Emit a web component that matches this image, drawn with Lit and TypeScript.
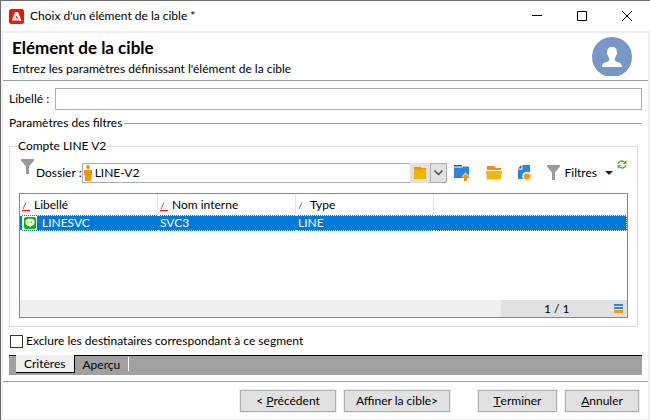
import { LitElement, html, css, svg } from "lit";
import { customElement, property, state } from "lit/decorators.js";
import { classMap } from "lit/directives/class-map.js";

const funnel = html`<svg class="funnel" width="13" height="15" viewBox="0 0 13 15" aria-hidden="true">
  <path fill="#9a9a9a" d="M0 0h13v1.5L8 7.5V15H5V7.5L0 1.5z" />
</svg>`;

const sortMark = (active: boolean) => html`<svg class="sort" width="8" height="9" viewBox="0 0 8 9" aria-hidden="true">
  <path d="M1 7L4 0.5" stroke="#777" fill="none" />
  ${active ? svg`<path d="M0 8.5h8" stroke="#f00" />` : ""}
</svg>`;

interface Service {
  label: string;
  name: string;
  type: string;
}

@customElement("service-table")
export class ServiceTable extends LitElement {
  @property({ attribute: false }) rows: Service[] = [];

  static styles = css`
    :host {
      display: flex;
      flex-direction: column;
      height: 125px;
      box-sizing: border-box;
      border: 1px solid #828790;
      background: #fff;
    }
    .grid {
      width: 100%;
      border-collapse: separate;
      border-spacing: 0;
      table-layout: fixed;
    }
    .c1, .c2, .c3 { width: 138px; }
    th, td {
      padding: 0 2px;
      text-align: left;
      font-weight: normal;
      white-space: nowrap;
      line-height: 14px;
    }
    th {
      height: 21px;
      border-right: 1px solid #e5e5e5;
      box-sizing: border-box;
    }
    th:last-child { border-right: 0; }
    .head { display: flex; align-items: center; gap: 4px; }
    .sort { margin-top: 3px; }
    td {
      height: 16px;
      box-sizing: border-box;
      background: #0078d7;
      color: #fff;
      border-top: 1px dotted #fff;
      border-bottom: 1px dotted #fff;
    }
    td:last-child { border-right: 1px dotted #fff; }
    .cell { display: flex; align-items: center; gap: 5px; }
    .badge { background: #fff; }
    .status {
      margin-top: auto;
      display: flex;
      justify-content: flex-end;
      height: 17px;
      background: #efefef;
    }
    .count {
      width: 126px;
      box-sizing: border-box;
      padding: 0 4px 0 43px;
      display: flex;
      align-items: center;
      justify-content: space-between;
      background: #e1e1e1;
    }
  `;

  render() {
    return html`
      <table class="grid">
        <colgroup><col class="c1" /><col class="c2" /><col class="c3" /><col /></colgroup>
        <thead>
          <tr>
            <th><div class="head">${sortMark(true)}Libellé</div></th>
            <th><div class="head">${sortMark(true)}Nom interne</div></th>
            <th><div class="head">${sortMark(false)}Type</div></th>
            <th></th>
          </tr>
        </thead>
        <tbody>
          ${this.rows.map(
            (r) => html`<tr>
              <td>
                <div class="cell">
                  <svg class="badge" width="15" height="14" viewBox="0 0 15 14" aria-hidden="true">
                    <rect x="2" y="1" width="12" height="12" rx="2" fill="#00b900" />
                    <ellipse cx="8" cy="6.3" rx="4.5" ry="3.7" fill="#fff" />
                    <path d="M7 9h3L8 12z" fill="#fff" />
                    <path d="M5.500 5.500v1.500h1M8 5.500V7M9.500 5.500V7h1" stroke="#00b900" stroke-width=".7" fill="none" />
                  </svg>
                  ${r.label}
                </div>
              </td>
              <td>${r.name}</td>
              <td>${r.type}</td>
              <td></td>
            </tr>`
          )}
        </tbody>
      </table>
      <div class="status">
        <div class="count">
          <span>1 / ${this.rows.length}</span>
          <svg width="9" height="9" viewBox="0 0 9 9" aria-hidden="true">
            <path d="M0 0h9v2H0zM0 3h9v2H0z" fill="#2f86d6" />
            <path d="M0 6h9v3H0z" fill="#f29b12" />
          </svg>
        </div>
      </div>
    `;
  }
}

@customElement("app-root")
export class AppRoot extends LitElement {
  @state() private tab = "Critères";

  private services: Service[] = [{ label: "LINESVC", name: "SVC3", type: "LINE" }];

  static styles = css`
    :host {
      display: flex;
      flex-direction: column;
      min-height: 100vh;
      box-sizing: border-box;
      border: 1px solid #6e6c6e;
      border-width: 1px 0 0 1px;
      background: #fff;
      color: #000;
      font: 12px/16px Lato, "Open Sans", sans-serif;
    }
    button, input { font: inherit; color: inherit; margin: 0; box-sizing: border-box; }
    button { padding: 0; border: 0; background: none; display: flex; align-items: center; justify-content: center; }
    svg { display: block; flex: none; }

    .titlebar { display: flex; align-items: center; height: 30px; padding: 0 18px 0 8px; }
    .caption { flex: 1; padding-left: 6px; }
    .window { width: 45px; height: 28px; justify-content: flex-end; }

    .body {
      flex: 1;
      display: flex;
      flex-direction: column;
      border: 2px solid #efefef;
      border-bottom-width: 1px;
    }
    .intro {
      display: flex;
      align-items: flex-start;
      justify-content: space-between;
      height: 48px;
      box-sizing: border-box;
      padding: 4px 16px 0 9px;
      border-bottom: 1px solid #a0a0a0;
    }
    h1 { margin: 1px 0 0; font-size: 17px; line-height: 20px; }
    .intro p { margin: 3px 0 0; }

    .form { padding: 7px 6px 0; }
    .field { display: flex; align-items: center; gap: 6px; }
    .field input { flex: 1; min-width: 0; height: 22px; border: 1px solid #abadb3; background: #fff; }
    .section { display: flex; align-items: center; gap: 2px; margin-top: 5px; }
    .rule { flex: 1; height: 1px; background: #a0a0a0; }

    fieldset {
      margin: 7px 4px 0 0;
      padding: 2px 9px 8px;
      min-width: 0;
      border: 1px solid #dcdcdc;
    }
    legend { padding: 0 1px; margin-left: -2px; }
    .tools { display: flex; align-items: center; height: 33px; padding-right: 1px; }
    .lens { margin: 0 2px 12px 2px; }
    .combo {
      flex: 1;
      min-width: 0;
      display: flex;
      height: 20px;
      margin: 0 7px 0 0;
      border: 1px solid #abadb3;
      border-right: 0;
      box-sizing: border-box;
    }
    .combo input { flex: 1; min-width: 0; border: 0; padding: 0 0 0 3px; background: none; }
    .person { margin: 1px 0 0 1px; }
    .browse { width: 20px; height: 20px; margin-top: -1px; background: #e1e1e1; }
    .drop { width: 17px; height: 20px; margin-top: -1px; background: #e1e1e1; border: 1px solid #adadad; }
    .up { margin-right: 16px; }
    .open { margin-right: 16px; }
    .doc { margin-right: 15px; }
    .filters { gap: 5px; }
    .filters .caret { margin-left: 3px; }
    .refresh { margin: 0 0 16px 4px; }
    service-table { margin-top: 4px; }

    .exclude { display: flex; align-items: center; gap: 3px; margin: 6px 0 0 1px; }
    .exclude input { appearance: none; width: 13px; height: 13px; border: 1px solid #333; background: #fff; }

    .tabs {
      display: flex;
      height: 20px;
      margin-top: 6px;
      padding-left: 7px;
      background: #a0a0a0;
      border-top: 1px solid #000;
      box-sizing: border-box;
    }
    .tab { padding: 0 8px; height: 17px; }
    .tab.on { background: #efefef; border: 1px solid #000; border-width: 0 1px 1px 0; margin-top: -1px; height: 18px; }
    .divider { width: 1px; height: 14px; margin-top: 1px; background: #fff; }

    .actions {
      display: flex;
      justify-content: flex-end;
      margin-top: 6px;
      padding: 8px 9px 6px 0;
      border-top: 1px solid #a0a0a0;
    }
    .push {
      height: 22px;
      margin-left: 8px;
      white-space: pre;
      background: #e1e1e1;
      border: 1px solid #adadad;
      outline: 1px solid #efefef;
    }
    .wide { width: 96px; }
    .wider { width: 106px; }
    .finish { width: 79px; margin-left: 28px; }
    .cancel { width: 74px; }
  `;

  render() {
    return html`
      <div class="titlebar">
        <svg width="15" height="15" viewBox="0 0 15 15" aria-hidden="true">
          <rect width="15" height="15" rx="2.5" fill="#fa0f00" />
          <path d="M6 3h3l3.500 9h-2.600L7.600 6.500 6.500 9.300h1.800l1 2.200H2.700z" fill="#fff" />
        </svg>
        <span class="caption">Choix d'un élément de la cible *</span>
        <button class="window" aria-label="Réduire">
          <svg width="10" height="10" viewBox="0 0 10 10"><path d="M0 4.500h10" stroke="#000" /></svg>
        </button>
        <button class="window" aria-label="Agrandir">
          <svg width="10" height="10" viewBox="0 0 10 10"><path d="M.5.5h9v9h-9z" stroke="#000" fill="none" /></svg>
        </button>
        <button class="window" aria-label="Fermer">
          <svg width="10" height="10" viewBox="0 0 10 10"><path d="M0 0l10 10M10 0l-10 10" stroke="#000" /></svg>
        </button>
      </div>
      <div class="body">
        <header class="intro">
          <div>
            <h1>Elément de la cible</h1>
            <p>Entrez les paramètres définissant l'élément de la cible</p>
          </div>
          <svg width="40" height="39" viewBox="0 0 40 39" aria-hidden="true">
            <circle cx="20" cy="20" r="20" fill="#7798c5" />
            <path fill="#fff" d="M20 10c3.500 0 5 2 4.800 5 .7 1 .2 2.700-.6 3.200-.3 1.500-.9 2.500-1.400 3.200-.3 2 .4 2.800 2 3.300 3 .9 5.200 1.500 5.200 5.300H10c0-3.800 2.200-4.400 5.200-5.300 1.600-.5 2.300-1.300 2-3.300-.5-.7-1.100-1.700-1.400-3.200-.8-.5-1.300-2.200-.6-3.200C15 12 16.500 10 20 10z" />
          </svg>
        </header>
        <main class="form">
          <div class="field">
            <label for="label">Libellé :</label>
            <input id="label" type="text" />
          </div>
          <div class="section"><span>Paramètres des filtres</span><span class="rule"></span></div>
          <fieldset>
            <legend>Compte LINE V2</legend>
            <div class="tools">
              <span class="lens">${funnel}</span>
              <label for="folder">Dossier :</label>
              <div class="combo">
                <svg class="person" width="8" height="16" viewBox="0 0 8 16" aria-hidden="true">
                  <circle cx="4" cy="2" r="2" fill="#f29400" />
                  <path d="M0 5h8v5H7v6H1v-6H0z" fill="#f29400" />
                </svg>
                <input id="folder" type="text" value="LINE-V2" />
                <button class="browse" aria-label="Parcourir">
                  <svg width="12" height="12" viewBox="0 0 12 12">
                    <path d="M0 0h7v1h5v2H0z" fill="#f29400" />
                    <path d="M0 3h7l1-1h4v10H0z" fill="#efb700" />
                  </svg>
                </button>
                <button class="drop" aria-label="Dérouler">
                  <svg width="9" height="6" viewBox="0 0 9 6"><path d="M.5.5l4 4 4-4" stroke="#444" stroke-width="1.300" fill="none" /></svg>
                </button>
              </div>
              <button class="up" aria-label="Dossier parent">
                <svg width="16" height="16" viewBox="0 0 16 16">
                  <path d="M0 0h8v1.500H0z" fill="#1c5fa8" />
                  <path d="M0 2.500h8L9 1.500h6V13H0z" fill="#2f86d6" />
                  <path d="M11.500 7.500L16 12h-2.500v4h-4v-4H7.500z" fill="#fff" />
                  <path d="M11.500 8.500L15.500 12.500h-2.500V16h-3v-3.500H7.800z" fill="#f29400" />
                </svg>
              </button>
              <button class="open" aria-label="Ouvrir le dossier">
                <svg width="16" height="14" viewBox="0 0 16 14">
                  <path d="M1 0h7l2 2h5v2H1z" fill="#f29400" />
                  <path d="M0 5h16l-1 8.500H1z" fill="#efb700" />
                </svg>
              </button>
              <button class="doc" aria-label="Nouveau">
                <svg width="14" height="16" viewBox="0 0 14 16">
                  <path d="M4.500 0H12v14H0V4.500h4.500z" fill="#2f86d6" />
                  <path d="M3.500 0v3.500H0z" fill="#1c5fa8" />
                  <circle cx="9" cy="11.500" r="4.800" fill="#fff" />
                  <circle cx="9" cy="11.500" r="2.800" fill="#f29400" />
                  <circle cx="9" cy="11.500" r="3.500" fill="none" stroke="#f29400" stroke-dasharray="1.400 1.350" />
                </svg>
              </button>
              <button class="filters">
                ${funnel}<span>Filtres</span>
                <svg class="caret" width="8" height="4" viewBox="0 0 8 4"><path d="M0 0h8L4 4z" fill="#222" /></svg>
              </button>
              <button class="refresh" aria-label="Actualiser">
                <svg width="10" height="9" viewBox="0 0 10 9">
                  <path d="M1.200 4C1.500 1.200 5 .2 7.500 2M8.800 5C8.500 7.800 5 8.800 2.500 7" fill="none" stroke="#62ad2f" stroke-width="1.500" />
                  <path d="M9.500 0v4H5.500zM.5 9V5h4z" fill="#62ad2f" />
                </svg>
              </button>
            </div>
            <service-table .rows=${this.services}></service-table>
          </fieldset>
          <label class="exclude"><input type="checkbox" />Exclure les destinataires correspondant à ce segment</label>
          <nav class="tabs">
            ${["Critères", "Aperçu"].map(
              (t) => html`<button class=${classMap({ tab: true, on: t === this.tab })} @click=${() => (this.tab = t)}>${t}</button>`
            )}
            <span class="divider"></span>
          </nav>
        </main>
        <footer class="actions">
          <button class="push wide">&lt; <u>P</u>récédent</button>
          <button class="push wider">Affiner la cible&gt;</button>
          <button class="push finish"><u>T</u>erminer</button>
          <button class="push cancel"><u>A</u>nnuler</button>
        </footer>
      </div>
    `;
  }
}
